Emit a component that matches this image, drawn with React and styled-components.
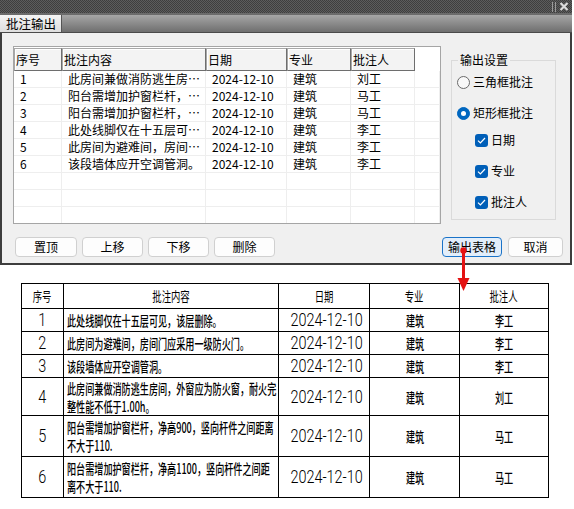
import React from 'react'
import styled, { createGlobalStyle } from 'styled-components'

const GlobalStyle = createGlobalStyle`
  html, body { margin: 0; padding: 0; background: #fff; }
  body {
    font-family: "Noto Sans CJK SC", "Noto Sans", sans-serif;
    font-size: 12px;
    color: #000;
  }
`

const Page = styled.div`
  position: relative;
  width: 574px;
  height: 509px;
  overflow: hidden;
`

const Window = styled.div`
  width: 572px;
`

const TitleBar = styled.div`
  height: 13px;
  display: flex;
  align-items: center;
  justify-content: flex-end;
  gap: 3px;
  padding-right: 3px;
  background: repeating-conic-gradient(#5c5c5c 0 25%, #3e3e3e 0 50%) 0 0 / 2px 2px;
  border-bottom: 2px solid #6b6b6b;
`

const Grip = styled.span`
  width: 4px;
  height: 10px;
  border-left: 1px solid #9a9a9a;
  border-right: 1px solid #9a9a9a;
  box-sizing: border-box;
`

const TabStrip = styled.div`
  height: 17px;
  display: flex;
  background: linear-gradient(#a6a6a6, #6f6f6f);
  border-bottom: 1px solid #4a4a4a;
`

const Tab = styled.div`
  width: 62px;
  box-sizing: border-box;
  padding-left: 6px;
  line-height: 17px;
  font-size: 12.5px;
  background: linear-gradient(#f4f4f4, #dedede);
  border-right: 1px solid #555;
`

const Body = styled.div`
  display: grid;
  grid-template-columns: 428px 1fr;
  grid-template-rows: 178px 20px;
  row-gap: 13px;
  padding: 13px 0 6px 11px;
  background: #f0f0f0;
  border: 2px solid #3d3d3d;
  border-top: none;
`

const ListView = styled.div`
  border: 1px solid #a5a5a5;
  background: #fff;
  padding-top: 1px;
  overflow: hidden;
`

const ListRow = styled.div`
  display: grid;
  grid-template-columns: 48px 144px 81px 64px 64px 1fr;
`

const HeadCell = styled.div`
  height: 23px;
  box-sizing: border-box;
  padding-left: 1px;
  line-height: 21px;
  background: #f3f3f3;
  border: 1px solid;
  border-color: #a8a8a8 #6e6e6e #6e6e6e #a8a8a8;
  box-shadow: inset 1px 1px #fff;
`

const Cell = styled.div`
  height: 17px;
  box-sizing: border-box;
  padding-left: 6px;
  line-height: 16px;
  white-space: nowrap;
  overflow: hidden;
  border-right: 1px solid #eeeeee;
  border-bottom: 1px solid #eeeeee;
`

const RightPane = styled.div`
  display: flex;
  flex-direction: column;
`

const GroupBox = styled.fieldset`
  margin: 6px 0 0 10px;
  padding: 0;
  width: 105px;
  height: 168px;
  box-sizing: border-box;
  border: 1px solid #dadada;
`

const Legend = styled.legend`
  margin-left: 6px;
  padding: 0 2px;
  line-height: 16px;
  font-size: 12px;
`

const Option = styled.div`
  display: flex;
  align-items: center;
  gap: 3px;
  height: 14px;
  line-height: 14px;
  margin-top: ${p => p.$top}px;
  margin-left: ${p => p.$left}px;
`

const Radio = styled.span`
  position: relative;
  width: 13px;
  height: 13px;
  box-sizing: border-box;
  border-radius: 50%;
  border: 1px solid ${p => (p.$on ? '#0067c0' : '#6a6a6a')};
  background: ${p => (p.$on ? '#0067c0' : '#f8f8f8')};

  &::after {
    content: '';
    display: ${p => (p.$on ? 'block' : 'none')};
    position: absolute;
    left: 3px;
    top: 3px;
    width: 5px;
    height: 5px;
    border-radius: 50%;
    background: #fff;
  }
`

const CheckBox = styled.span`
  display: flex;
  align-items: center;
  justify-content: center;
  width: 13px;
  height: 13px;
  border-radius: 3px;
  background: #005fb8;
`

const ButtonRow = styled.div`
  display: flex;
  gap: ${p => p.$gap}px;
  padding-left: ${p => p.$pad}px;
`

const Button = styled.button`
  width: ${p => p.$w}px;
  height: 20px;
  padding: 0;
  font-family: inherit;
  font-size: 12px;
  line-height: 18px;
  color: #000;
  border-radius: 4px;
  border: 1px solid ${p => (p.$focus ? '#1a73c8' : '#d0d0d0')};
  background: ${p => (p.$focus ? '#e3eefa' : '#fdfdfd')};
`

const Sheet = styled.div`
  padding: 18px 0 0 21px;
`

const Table = styled.table`
  width: 527px;
  border-collapse: collapse;
  table-layout: fixed;
`

const Tr = styled.tr`
  height: ${p => p.$h}px;
`

const Td = styled.td`
  border: 1px solid #000;
  padding: 0 0 0 ${p => (p.$left ? 3 : 0)}px;
  text-align: ${p => (p.$left ? 'left' : 'center')};
  vertical-align: middle;
  overflow: visible;
  white-space: nowrap;
`

const Cad = styled.span`
  display: inline-block;
  font-family: ${p => (p.$num ? 'Roboto, "Liberation Sans", sans-serif' : '"Noto Sans CJK SC", sans-serif')};
  font-size: ${p => p.$size}px;
  font-weight: ${p => p.$weight || 400};
  line-height: 18px;
  transform: scaleX(${p => p.$scale});
  transform-origin: ${p => (p.$left ? 'left' : 'center')} center;
`

const Arrow = styled.svg`
  position: absolute;
  left: 0;
  top: 0;
  pointer-events: none;
`

// list view shows the clipped text the way the dialog draws it
const rows = [
  ['1', '此房间兼做消防逃生房…', '刘工'],
  ['2', '阳台需增加护窗栏杆，…', '马工'],
  ['3', '阳台需增加护窗栏杆，…', '马工'],
  ['4', '此处线脚仅在十五层可…', '李工'],
  ['5', '此房间为避难间，房间…', '李工'],
  ['6', '该段墙体应开空调管洞。', '李工'],
]

const sheetRows = [
  { no: '1', lines: ['此处线脚仅在十五层可见，该层删除。'], who: '李工', h: 23 },
  { no: '2', lines: ['此房间为避难间，房间门应采用一级防火门。'], who: '李工', h: 23 },
  { no: '3', lines: ['该段墙体应开空调管洞。'], who: '李工', h: 23 },
  { no: '4', lines: ['此房间兼做消防逃生房间，外窗应为防火窗，耐火完', '整性能不低于1.00h。'], who: '刘工', h: 38 },
  { no: '5', lines: ['阳台需增加护窗栏杆，净高900，竖向杆件之间距离', '不大于110.'], who: '马工', h: 41 },
  { no: '6', lines: ['阳台需增加护窗栏杆，净高1100，竖向杆件之间距', '离不大于110.'], who: '马工', h: 41 },
]

const Han = ({ children, left, size = 14, scale = 0.65, weight = 500 }) => (
  <Cad $size={size} $scale={scale} $left={left} $weight={weight}>{children}</Cad>
)

const Num = ({ children }) => (
  <Cad $num $size={19} $scale={0.76} $weight={300}>{children}</Cad>
)

const App = () => {
  return (
    <Page>
      <GlobalStyle />
      <Window>
        <TitleBar>
          <Grip />
          <svg width="10" height="9" viewBox="0 0 10 9">
            <path d="M1.5 1 L8.5 8 M8.5 1 L1.5 8" stroke="#dcdcdc" strokeWidth="2.2" />
          </svg>
        </TitleBar>
        <TabStrip>
          <Tab>批注输出</Tab>
        </TabStrip>
        <Body>
          <ListView>
            <ListRow>
              <HeadCell>序号</HeadCell>
              <HeadCell>批注内容</HeadCell>
              <HeadCell>日期</HeadCell>
              <HeadCell>专业</HeadCell>
              <HeadCell>批注人</HeadCell>
              <div />
            </ListRow>
            {rows.map(r => (
              <ListRow key={r[0]}>
                <Cell>{r[0]}</Cell>
                <Cell>{r[1]}</Cell>
                <Cell>2024-12-10</Cell>
                <Cell>建筑</Cell>
                <Cell>{r[2]}</Cell>
                <Cell />
              </ListRow>
            ))}
            {[7, 8, 9].map(n => (
              <ListRow key={n}>
                <Cell /><Cell /><Cell /><Cell /><Cell /><Cell />
              </ListRow>
            ))}
          </ListView>

          <RightPane>
            <GroupBox>
              <Legend>输出设置</Legend>
              <Option $top={7} $left={5}><Radio />三角框批注</Option>
              <Option $top={17} $left={5}><Radio $on />矩形框批注</Option>
              {['日期', '专业', '批注人'].map((t, i) => (
                <Option key={t} $top={i === 0 ? 13 : 17} $left={23}>
                  <CheckBox>
                    <svg width="9" height="7" viewBox="0 0 9 7">
                      <path d="M1 3.6 L3.4 6 L8 1" fill="none" stroke="#fff" strokeWidth="1.2" />
                    </svg>
                  </CheckBox>
                  {t}
                </Option>
              ))}
            </GroupBox>
          </RightPane>

          <ButtonRow $gap={5} $pad={2}>
            <Button $w={62}>置顶</Button>
            <Button $w={61}>上移</Button>
            <Button $w={61}>下移</Button>
            <Button $w={61}>删除</Button>
          </ButtonRow>
          <ButtonRow $gap={6} $pad={1}>
            <Button $w={60} $focus>输出表格</Button>
            <Button $w={55}>取消</Button>
          </ButtonRow>
        </Body>
      </Window>

      <Sheet>
        <Table>
          <colgroup>
            <col style={{ width: 42 }} />
            <col style={{ width: 215 }} />
            <col style={{ width: 91 }} />
            <col style={{ width: 90 }} />
            <col style={{ width: 89 }} />
          </colgroup>
          <tbody>
            <Tr $h={25}>
              <Td><Han size={13} scale={0.72} weight={400}>序号</Han></Td>
              <Td><Han size={13} scale={0.72} weight={400}>批注内容</Han></Td>
              <Td><Han size={13} scale={0.72} weight={400}>日期</Han></Td>
              <Td><Han size={13} scale={0.72} weight={400}>专业</Han></Td>
              <Td><Han size={13} scale={0.72} weight={400}>批注人</Han></Td>
            </Tr>
            {sheetRows.map(r => (
              <Tr key={r.no} $h={r.h}>
                <Td><Num>{r.no}</Num></Td>
                <Td $left>
                  {r.lines.map(l => (
                    <div key={l}><Han left>{l}</Han></div>
                  ))}
                </Td>
                <Td><Num>2024-12-10</Num></Td>
                <Td><Han>建筑</Han></Td>
                <Td><Han>{r.who}</Han></Td>
              </Tr>
            ))}
          </tbody>
        </Table>
      </Sheet>

      <Arrow width="574" height="300" viewBox="0 0 574 300">
        <circle cx="463.5" cy="250.5" r="3.2" fill="#e41212" />
        <line x1="463.5" y1="250" x2="463.5" y2="281" stroke="#e41212" strokeWidth="3" />
        <path d="M457.5 278 L469.5 278 L463.5 291 Z" fill="#e41212" />
      </Arrow>
    </Page>
  )
}

export default App
